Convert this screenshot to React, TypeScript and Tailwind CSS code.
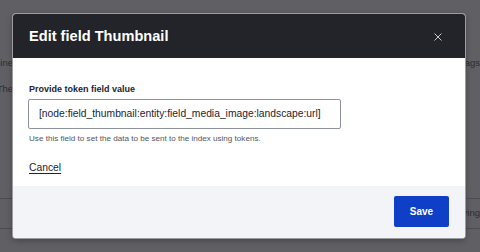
import React from "react";

export default function App() {
  return (
    <div
      className="relative w-[480px] h-[252px] overflow-hidden bg-[#606064]"
      style={{ fontFamily: '"Liberation Sans", Arial, sans-serif' }}
    >
      {/* page behind the overlay */}
      <div className="flex flex-col text-[9.5px] text-[#2b2b30]">
        <div className="h-[57px]" />
        <div className="flex h-[12px] items-center justify-between">
          <div className="w-[13px] overflow-hidden whitespace-nowrap flex justify-end">
            <span>Machine</span>
          </div>
          <div className="w-[15px] overflow-hidden whitespace-nowrap flex justify-end">
            <span>Tags</span>
          </div>
        </div>
        <div className="h-[14px]" />
        <div className="flex h-[12px] items-center">
          <div className="w-[13px] overflow-hidden whitespace-nowrap flex justify-end">
            <span>The</span>
          </div>
        </div>
        <div className="h-[103px]" />
        <div className="border-t border-[#4c4c50] h-[30px] flex items-center justify-end">
          <div className="w-[15px] overflow-hidden whitespace-nowrap flex justify-end">
            <span>Saving</span>
          </div>
        </div>
        <div className="border-t border-[#4c4c50] flex-1 bg-[#58585c] h-[30px]" />
      </div>

      {/* modal */}
      <div className="absolute left-[13px] top-[14px] w-[452px] h-[224px] rounded-[3px] overflow-hidden flex flex-col bg-white ring-1 ring-[#9c9ca0] shadow-[0_2px_6px_rgba(0,0,0,0.35)]">
        <div className="h-[44px] bg-[#232429] flex items-center justify-between pl-[16px] pr-[23px]">
          <span className="text-white font-bold text-[14.6px] leading-none">Edit field Thumbnail</span>
          <svg width="8" height="8" viewBox="0 0 8 8" className="mt-[1px]">
            <path d="M0.5 0.5 L7.5 7.5 M7.5 0.5 L0.5 7.5" stroke="#c8c8cc" strokeWidth="1" />
          </svg>
        </div>
        <div className="flex-1 bg-white pl-[15px] pt-[26px] flex flex-col items-start">
          <div className="pl-[1px] text-[9px] leading-[11px] font-bold text-[#222330]">Provide token field value</div>
          <div className="mt-[4px] w-[313px] h-[30px] border border-[#8e929c] rounded-[2px] flex items-center pl-[10px] text-[10.3px] text-[#222330] whitespace-nowrap">
            [node:field_thumbnail:entity:field_media_image:landscape:url]
          </div>
          <div className="mt-[5px] pl-[1px] text-[8.1px] leading-[10px] text-[#545560]">
            Use this field to set the data to be sent to the index using tokens.
          </div>
          <div className="mt-[18px] pl-[1px] text-[10.3px] leading-[12px] text-[#222330] underline underline-offset-[1.5px]">
            Cancel
          </div>
        </div>
        <div className="h-[52px] bg-[#f3f4f7] flex items-start justify-end pr-[16px] pt-[10px]">
          <div className="w-[55px] h-[31px] rounded-[2px] bg-[#0f3fc6] flex items-center justify-center text-white font-bold text-[10px]">
            Save
          </div>
        </div>
      </div>
    </div>
  );
}
